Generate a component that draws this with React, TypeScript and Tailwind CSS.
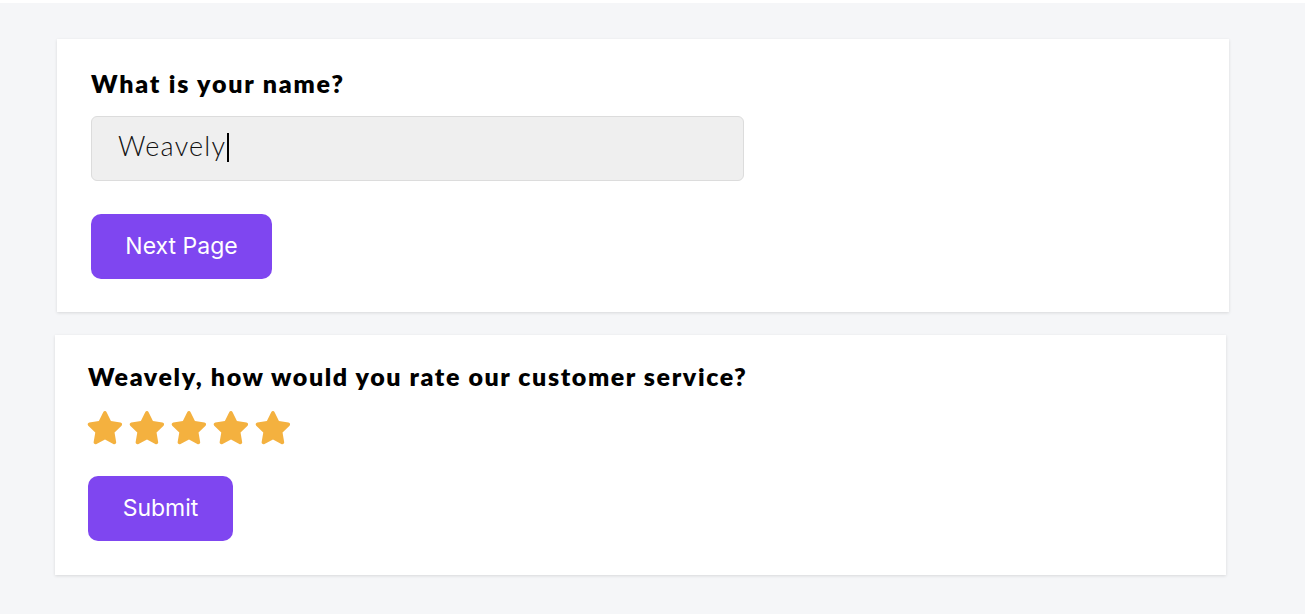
import { useState } from "react";

function Star() {
  return (
    <svg viewBox="2 2 20 20" className="h-[36px] w-[36px]" fill="#f4b13f">
      <path d="M12 2.6c.4 0 .7.2.9.6l2.4 4.9 5.3.8c.9.1 1.2 1.2.6 1.8l-3.9 3.8.9 5.3c.2.9-.8 1.6-1.6 1.1L12 18.4l-4.7 2.5c-.8.5-1.8-.2-1.6-1.1l.9-5.3-3.9-3.8c-.6-.6-.3-1.7.6-1.8l5.3-.8 2.4-4.9c.2-.4.6-.6 1-.6z" />
    </svg>
  );
}

export default function App() {
  const [name] = useState("Weavely");

  return (
    <div className="min-h-[614px] bg-white pt-[3px]">
      <div
        className="min-h-[611px] bg-[#f5f6f8] pl-[57px] pr-[76px] pt-[36px] pb-[38px] flex flex-col gap-[23px]"
        style={{ fontFamily: "Lato, 'Noto Sans', sans-serif" }}
      >
        {/* name question */}
        <div className="bg-white shadow-[0_1px_3px_rgba(0,0,0,0.12)] pl-[34px] pt-[28px] pb-[33px]">
          <h2 className="text-[25px] font-extrabold text-black leading-[32px] tracking-[1.8px]">
            What is your name?
          </h2>
          <div className="mt-[17px] w-[653px] h-[65px] rounded-[6px] border border-[#dcdcdc] bg-[#efefef] flex items-center px-[26px]">
            <div className="flex items-center text-[27px] font-light text-[#111] tracking-[1.2px] leading-[34px] -mt-[6px]">
              {name}
              <span className="ml-[1px] inline-block w-[1.5px] h-[29px] bg-black mt-[4px]" />
            </div>
          </div>
          <button
            className="mt-[33px] w-[181px] h-[65px] rounded-[10px] bg-[#7f46f0] text-white text-[23px]"
            style={{ fontFamily: "Inter, sans-serif" }}
          >
            Next Page
          </button>
        </div>

        {/* rating question */}
        <div className="bg-white shadow-[0_1px_3px_rgba(0,0,0,0.12)] pl-[33px] pt-[25px] pb-[34px] mr-[3px] -ml-[2px]">
          <h2 className="text-[25px] font-extrabold text-black leading-[32px] tracking-[1.6px]">
            {name}, how would you rate our customer service?
          </h2>
          <div className="mt-[18px] flex gap-[6px] -ml-[1px]">
            <Star />
            <Star />
            <Star />
            <Star />
            <Star />
          </div>
          <button
            className="mt-[30px] w-[145px] h-[65px] rounded-[10px] bg-[#7f46f0] text-white text-[23px]"
            style={{ fontFamily: "Inter, sans-serif" }}
          >
            Submit
          </button>
        </div>
      </div>
    </div>
  );
}
